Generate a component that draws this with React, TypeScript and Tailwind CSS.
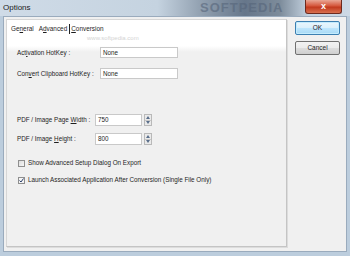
import React from "react";

const U = ({ children }: { children: React.ReactNode }) => <span className="underline">{children}</span>;

function Spinner() {
  return (
    <div className="ml-[2px] flex h-[12px] w-[8px] flex-col border border-[#b9b9b9] bg-[#eaeaea]">
      <div className="flex flex-1 items-center justify-center border-b border-[#c8c8c8]">
        <svg width="4" height="3" viewBox="0 0 4 3"><path d="M0 3L2 0L4 3Z" fill="#5a6e8a" /></svg>
      </div>
      <div className="flex flex-1 items-center justify-center">
        <svg width="4" height="3" viewBox="0 0 4 3"><path d="M0 0L2 3L4 0Z" fill="#5a6e8a" /></svg>
      </div>
    </div>
  );
}

export default function App() {
  const font = { fontFamily: '"Liberation Sans", Arial, sans-serif' };
  return (
    <div className="flex h-[256px] w-[350px] flex-col overflow-hidden bg-[#bccddd]" style={font}>
      {/* title bar */}
      <div className="relative h-[16px] bg-[linear-gradient(90deg,#cfdbe7_0%,#c5d3e0_45%,#8f9eae_58%,#66768a_70%,#7d8c9b_80%,#c3d1df_88%,#cdd9e5_100%)]">
        <span className="absolute left-[3px] top-[3px] text-[8px] leading-[9px] text-[#1a1a1a]">Options</span>
        <span className="absolute left-[200px] top-[1px] text-[13px] font-bold leading-[13px] tracking-[1px] text-[#56657a] opacity-60">SOFTPEDIA</span>
        <div className="absolute right-[8px] top-0 flex h-[14px] w-[37px] items-center justify-center rounded-b-[3px] border border-t-0 border-[#6d2a1e] bg-[linear-gradient(180deg,#e9a795_0%,#d5573c_45%,#c23a1e_55%,#d8704f_100%)]">
          <span className="text-[9px] font-bold leading-[9px] text-white">x</span>
        </div>
      </div>
      {/* client area */}
      <div className="mx-[3px] mb-[4px] flex flex-1 border border-[#9aabbd] bg-[#f0f0f0]">
        <div className="ml-[2px] mt-[2px] mb-[4px] flex w-[281px] flex-col border border-[#d6d6d6] border-b-[#c4c4c4] border-r-[#c4c4c4] shadow-[1px_1px_0_#dcdcdc] bg-[linear-gradient(180deg,#ffffff_0px,#ffffff_26px,#f0f0f0_32px,#f0f0f0_100%)]">
          {/* tab strip */}
          <div className="flex h-[15px] items-end pl-[4px] text-[6.4px] leading-[9px] text-[#1e1e1e]">
            <span className="pb-[2px]">Ge<U>n</U>eral</span>
            <span className="ml-[5px] pb-[2px]">A<U>d</U>vanced</span>
            <span className="ml-[2px] mb-[1px] h-[10px] w-px bg-[#222]" />
            <span className="ml-[1px] pb-[2px]"><U>C</U>onversion</span>
          </div>
          <div className="relative text-[6.5px] leading-[8px] text-[#1e1e1e]">
            <span className="absolute left-[80px] -top-[1px] text-[6px] text-[#d4d4d4]">www.softpedia.com</span>
          </div>
          {/* body */}
          <div className="flex flex-col pl-[10px] text-[6.3px] leading-[8px] text-[#1e1e1e]">
            <div className="mt-[12px] flex items-center">
              <span className="w-[83px]">Act<U>i</U>vation HotKey :</span>
              <div className="flex h-[11px] w-[78px] items-center border border-[#c9c9c9] bg-white pl-[2px]">None</div>
            </div>
            <div className="mt-[10px] flex items-center">
              <span className="w-[83px]">Con<U>v</U>ert Clipboard HotKey :</span>
              <div className="flex h-[11px] w-[78px] items-center border border-[#c9c9c9] bg-white pl-[2px]">None</div>
            </div>
            <div className="mt-[35px] flex items-center">
              <span className="w-[78px]">PDF / Image Page <U>W</U>idth :</span>
              <div className="flex h-[12px] w-[47px] items-center border border-[#c9c9c9] bg-white pl-[2px]">750</div>
              <Spinner />
            </div>
            <div className="mt-[7px] flex items-center">
              <span className="w-[78px]">PDF / Image <U>H</U>eight :</span>
              <div className="flex h-[12px] w-[47px] items-center border border-[#c9c9c9] bg-white pl-[2px]">800</div>
              <Spinner />
            </div>
            <div className="mt-[14px] flex items-center">
              <div className="ml-[1px] h-[7px] w-[7px] border border-[#8f8f8f] bg-[linear-gradient(135deg,#dcdcdc,#f6f6f6)]" />
              <span className="ml-[3px]">Show Advanced Setup Dialog On Export</span>
            </div>
            <div className="mt-[9px] flex items-center">
              <div className="ml-[1px] flex h-[7px] w-[7px] items-center justify-center border border-[#8f8f8f] bg-[#f4f4f4]">
                <svg width="5" height="5" viewBox="0 0 5 5"><path d="M0.5 2.5L2 4L4.5 0.5" stroke="#2a3f6a" strokeWidth="1" fill="none" /></svg>
              </div>
              <span className="ml-[3px]">Launch Associated Application After Conversion (Single File Only)</span>
            </div>
          </div>
        </div>
        {/* buttons */}
        <div className="ml-[8px] mt-[4px] flex flex-col text-[6.5px] leading-[8px] text-[#1e1e1e]">
          <div className="flex h-[14px] w-[45px] items-center justify-center rounded-[2px] border border-[#3c7fb1] bg-[linear-gradient(180deg,#eaf6fd_0%,#d9f0fc_50%,#bee6fd_51%,#a7d9f5_100%)] shadow-[inset_0_0_0_1px_#c4ecfd]">OK</div>
          <div className="mt-[6px] flex h-[14px] w-[45px] items-center justify-center rounded-[2px] border border-[#707070] bg-[linear-gradient(180deg,#f2f2f2_0%,#ebebeb_50%,#dddddd_51%,#cfcfcf_100%)]">Cancel</div>
        </div>
      </div>
    </div>
  );
}
